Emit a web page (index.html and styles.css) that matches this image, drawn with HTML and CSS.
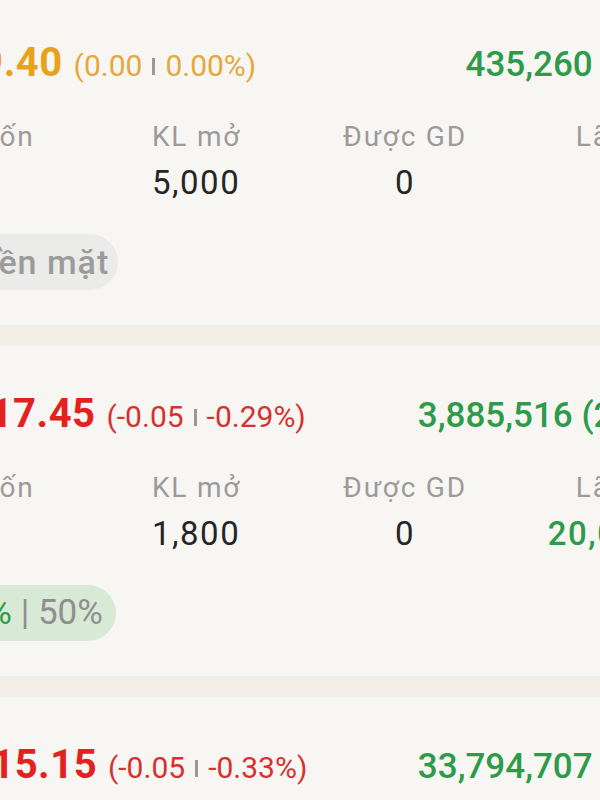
FILE: index.html
```html
<!DOCTYPE html>
<html lang="vi">
<head>
  <meta charset="UTF-8">
  <title>Danh mục</title>
  <link rel="stylesheet" href="styles.css">
</head>
<body>
  <div class="list">

    <div class="card">
      <div class="price-row">
        <div class="quote">
          <span class="ticker">DIG</span>
          <span class="price ref">9.40</span>
          <span class="change ref">(0.00<i class="bar"></i>0.00%)</span>
        </div>
        <div class="vol">435,260 (1.2%)</div>
      </div>
      <div class="stats">
        <div class="label">Giá vốn</div>
        <div class="label">KL mở</div>
        <div class="label center">Được GD</div>
        <div class="label right">Lãi/lỗ</div>
        <div class="value">9.3</div>
        <div class="value">5,000</div>
        <div class="value center">0</div>
        <div class="value right">0</div>
      </div>
      <div class="tags">
        <span class="tag tag-cash">Tiền mặt</span>
      </div>
    </div>

    <div class="card">
      <div class="price-row">
        <div class="quote">
          <span class="ticker">STB</span>
          <span class="price down">17.45</span>
          <span class="change down">(-0.05<i class="bar"></i>-0.29%)</span>
        </div>
        <div class="vol">3,885,516 (22.5%)</div>
      </div>
      <div class="stats">
        <div class="label">Giá vốn</div>
        <div class="label">KL mở</div>
        <div class="label center">Được GD</div>
        <div class="label right">Lãi/lỗ</div>
        <div class="value">6.3</div>
        <div class="value">1,800</div>
        <div class="value center">0</div>
        <div class="value right up">20,000</div>
      </div>
      <div class="tags">
        <span class="tag tag-margin"><span class="up">50%</span> | 50%</span>
      </div>
    </div>

    <div class="card">
      <div class="price-row">
        <div class="quote">
          <span class="ticker">PVS</span>
          <span class="price down">15.15</span>
          <span class="change down">(-0.05<i class="bar"></i>-0.33%)</span>
        </div>
        <div class="vol">33,794,707 (2.5%)</div>
      </div>
      <div class="stats">
        <div class="label">Giá vốn</div>
        <div class="label">KL mở</div>
        <div class="label center">Được GD</div>
        <div class="label right">Lãi/lỗ</div>
        <div class="value">8.1</div>
        <div class="value">2,500</div>
        <div class="value center">0</div>
        <div class="value right">0</div>
      </div>
    </div>

  </div>
</body>
</html>
```

FILE: styles.css
```css
body {
  margin: 0;
  font-family: Roboto, "Liberation Sans", sans-serif;
  background-color: #f3ede8;
  overflow: hidden;
}
.list {
  display: flex;
  flex-direction: column;
  gap: 21px;
  width: 811px;
  margin: -5px 0 0 -110px;
}
.card {
  background: #f8f6f3;
  padding: 46px 0 35px 8px;
}
.price-row {
  display: flex;
  justify-content: space-between;
  align-items: baseline;
  height: 44px;
  line-height: 44px;
  white-space: nowrap;
}
.ticker {
  font-size: 38px;
  font-weight: 700;
  letter-spacing: 1.5px;
  color: #222;
  margin-right: 12px;
}
.price {
  font-size: 40px;
  font-weight: 700;
  letter-spacing: 0.5px;
  margin-right: 7px;
}
.change {
  font-size: 30px;
}
.bar {
  display: inline-block;
  width: 3px;
  height: 17px;
  margin: 0 10px;
  vertical-align: 1px;
  background: #9a9a9a;
}
.ref { color: #e9a21c; }
.change.ref { color: #e4a83c; }
.down { color: #e3211f; }
.change.down { color: #d6312e; }
.up { color: #2d9b4a; }
.vol {
  font-size: 35px;
  font-weight: 500;
  color: #2d9b4a;
}
.stats {
  display: grid;
  grid-template-columns: 223px 148px 210px 148px;
  row-gap: 11px;
  margin: 35px 0 0 31px;
  white-space: nowrap;
}
.label {
  font-size: 28px;
  letter-spacing: 1.8px;
  line-height: 34px;
  color: #9b9b9b;
}
.value {
  font-size: 33px;
  letter-spacing: 1.5px;
  line-height: 36px;
  color: #252525;
}
.value.up { color: #2d9b4a; font-weight: 500; }
.center { text-align: center; }
.right { text-align: right; }
.tags {
  display: flex;
  margin-top: 33px;
}
.tag {
  height: 56px;
  line-height: 56px;
  padding: 0 13px 0 16px;
  border-radius: 28px;
  white-space: nowrap;
}
.tag-cash {
  margin-left: 53px;
  padding-right: 9px;
  background: #ebebea;
  color: #9b9b9b;
  font-size: 34px;
  font-weight: 500;
  letter-spacing: 1px;
}
.tag-margin {
  margin-left: 33px;
  background: #d8e9d6;
  color: #8f8f8f;
  font-size: 35px;
}
```
